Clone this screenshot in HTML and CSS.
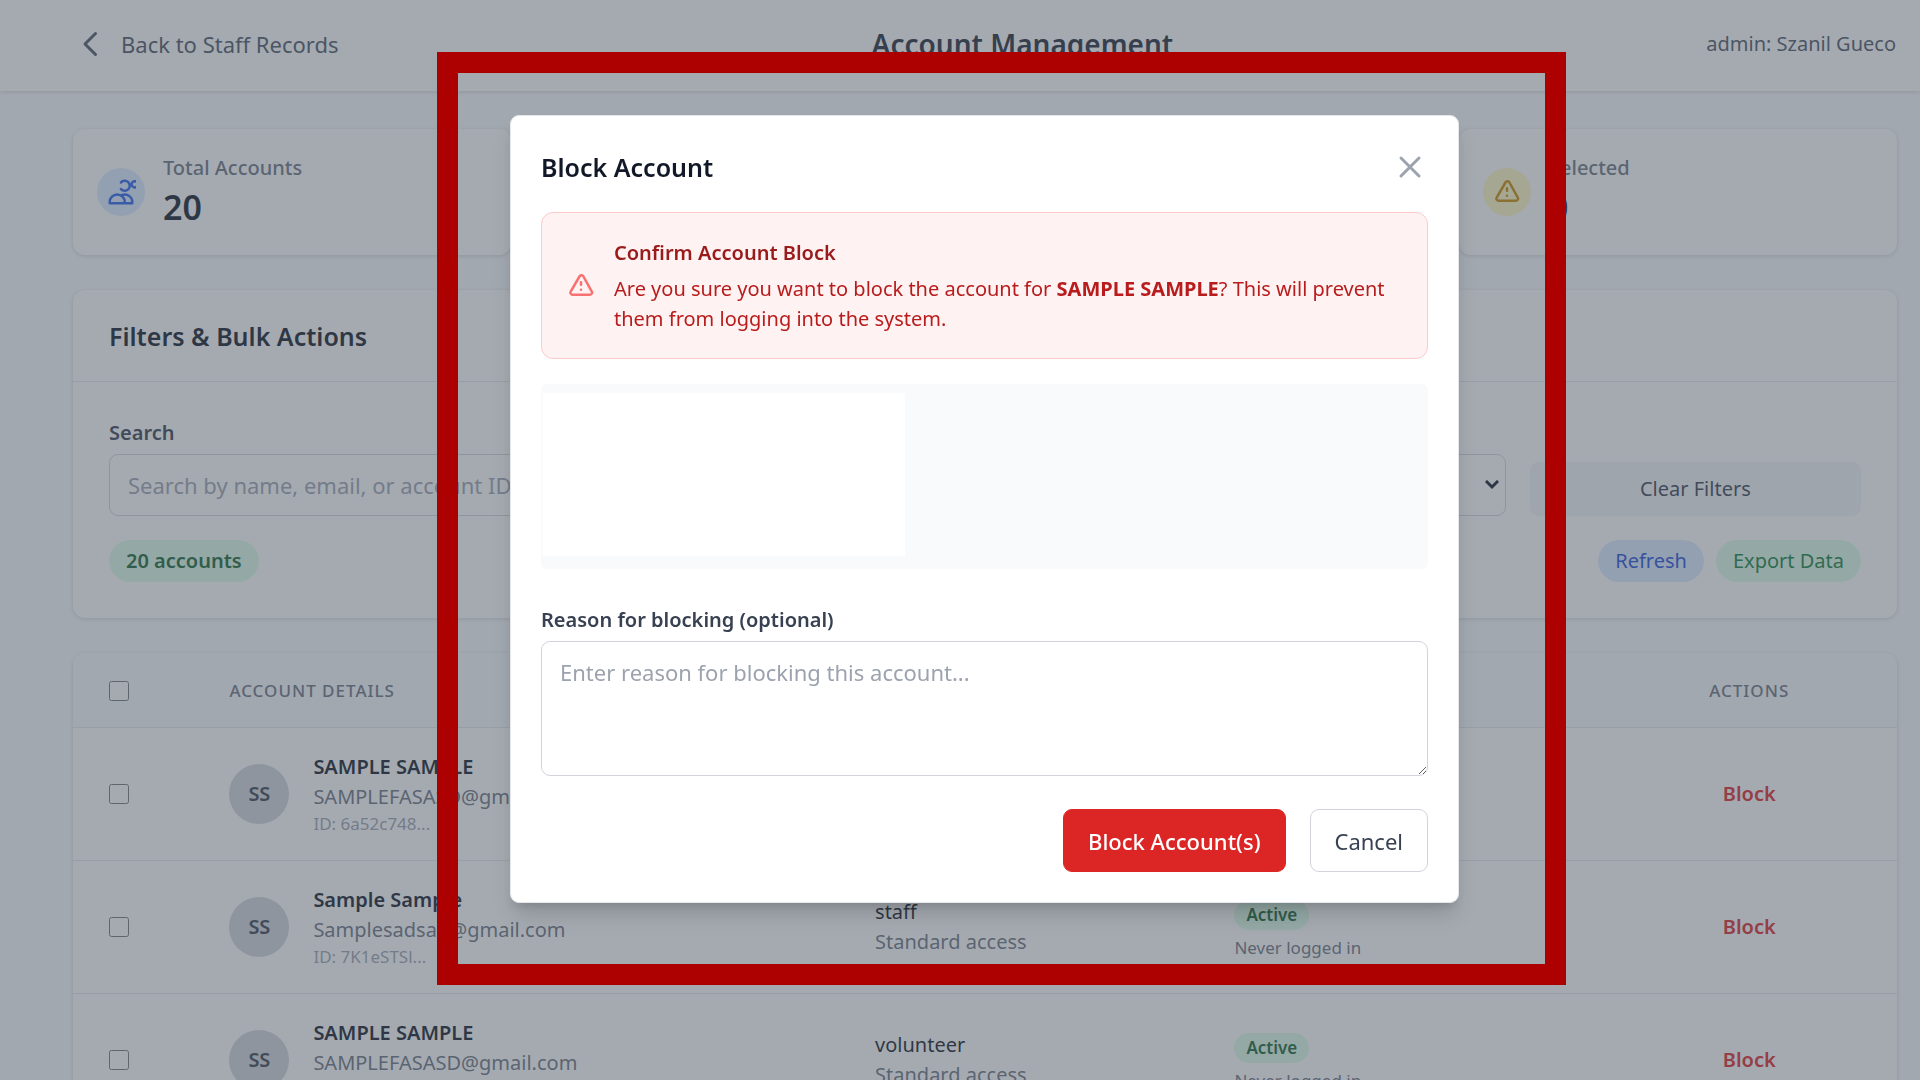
FILE: index.html
```html
<!DOCTYPE html>
<html lang="en">
<head>
<meta charset="utf-8">
<meta name="viewport" content="width=device-width, initial-scale=1">
<title>Account Management</title>
<link rel="stylesheet" href="styles.css">
</head>
<body>
<header class="topbar">
  <a class="back" href="#">
    <svg class="icon-lg" viewBox="0 0 24 24"><path d="M15 19l-7-7 7-7"/></svg>
    Back to Staff Records
  </a>
  <h1 class="page-title">Account Management</h1>
  <span class="user">admin: Szanil Gueco</span>
</header>

<main class="content">
  <section class="stats">
    <div class="card stat">
      <span class="badge blue"><svg class="icon" viewBox="0 0 24 24"><path d="M12 4.354a4 4 0 110 5.292M15 21H3v-1a6 6 0 0112 0v1zm0 0h6v-1a6 6 0 00-9-5.197m13.5-9a2.5 2.5 0 11-5 0 2.5 2.5 0 015 0z"/></svg></span>
      <div><p class="stat-label">Total Accounts</p><p class="stat-value">20</p></div>
    </div>
    <div class="card stat">
      <span class="badge green"><svg class="icon" viewBox="0 0 24 24"><path d="M5 13l4 4L19 7"/></svg></span>
      <div><p class="stat-label">Active</p><p class="stat-value">20</p></div>
    </div>
    <div class="card stat">
      <span class="badge red"><svg class="icon" viewBox="0 0 24 24"><path d="M6 6l12 12M18 6L6 18"/></svg></span>
      <div><p class="stat-label">Blocked</p><p class="stat-value">0</p></div>
    </div>
    <div class="card stat">
      <span class="badge yellow"><svg class="icon" viewBox="0 0 24 24"><path d="M12 9v2m0 4h.01m-6.938 4h13.856c1.54 0 2.502-1.667 1.732-2.5L13.732 4c-.77-.833-1.964-.833-2.732 0L3.732 16.5c-.77.833.192 2.5 1.732 2.5z"/></svg></span>
      <div><p class="stat-label">Selected</p><p class="stat-value">0</p></div>
    </div>
  </section>

  <section class="card filters">
    <h2 class="card-head">Filters &amp; Bulk Actions</h2>
    <div class="card-body">
      <div class="filter-grid">
        <div class="field wide">
          <label for="search">Search</label>
          <input class="control" id="search" type="text" placeholder="Search by name, email, or account ID...">
        </div>
        <div class="field">
          <label for="role">Role</label>
          <div class="select">
            <select class="control" id="role"><option>All Roles</option></select>
            <svg class="caret" viewBox="0 0 14 10"><path d="M2 2l5 5 5-5"/></svg>
          </div>
        </div>
        <div class="field">
          <label for="status">Status</label>
          <div class="select">
            <select class="control" id="status"><option>All Status</option></select>
            <svg class="caret" viewBox="0 0 14 10"><path d="M2 2l5 5 5-5"/></svg>
          </div>
        </div>
        <button class="clear" type="button">Clear Filters</button>
      </div>
      <div class="actions-row">
        <span class="pill pill-count">20 accounts</span>
        <div class="pill-group">
          <button class="pill pill-blue" type="button">Refresh</button>
          <button class="pill pill-green" type="button">Export Data</button>
        </div>
      </div>
    </div>
  </section>

  <section class="card">
    <table class="accounts">
      <colgroup><col class="c-check"><col class="c-details"><col class="c-role"><col class="c-status"><col></colgroup>
      <thead>
        <tr><th><input type="checkbox" aria-label="Select all"></th><th>Account Details</th><th>Role</th><th>Status</th><th class="center">Actions</th></tr>
      </thead>
      <tbody>
        <tr>
          <td><input type="checkbox" aria-label="Select account 1"></td>
          <td><div class="person"><span class="avatar">SS</span><div><p class="name">SAMPLE SAMPLE</p><p class="mail">SAMPLEFASASD@gmail.com</p><p class="uid">ID: 6a52c748...</p></div></div></td>
          <td><p class="role">volunteer</p><p class="mail">Standard access</p></td>
          <td><span class="status">Active</span><p class="login">Never logged in</p></td>
          <td class="center"><button class="block" type="button">Block</button></td>
        </tr>
        <tr>
          <td><input type="checkbox" aria-label="Select account 2"></td>
          <td><div class="person"><span class="avatar">SS</span><div><p class="name">Sample Sample</p><p class="mail">Samplesadsad@gmail.com</p><p class="uid">ID: 7K1eSTSl...</p></div></div></td>
          <td><p class="role">staff</p><p class="mail">Standard access</p></td>
          <td><span class="status">Active</span><p class="login">Never logged in</p></td>
          <td class="center"><button class="block" type="button">Block</button></td>
        </tr>
        <tr>
          <td><input type="checkbox" aria-label="Select account 3"></td>
          <td><div class="person"><span class="avatar">SS</span><div><p class="name">SAMPLE SAMPLE</p><p class="mail">SAMPLEFASASD@gmail.com</p><p class="uid">ID: 6a52c748...</p></div></div></td>
          <td><p class="role">volunteer</p><p class="mail">Standard access</p></td>
          <td><span class="status">Active</span><p class="login">Never logged in</p></td>
          <td class="center"><button class="block" type="button">Block</button></td>
        </tr>
      </tbody>
    </table>
  </section>
</main>

<div class="overlay">
  <div class="modal" role="dialog" aria-labelledby="modal-title">
    <div class="modal-head">
      <h2 id="modal-title">Block Account</h2>
      <button class="close" type="button" aria-label="Close"><svg class="icon-lg" viewBox="0 0 24 24"><path d="M6 18L18 6M6 6l12 12"/></svg></button>
    </div>
    <div class="alert">
      <svg class="icon" viewBox="0 0 24 24"><path d="M12 9v2m0 4h.01m-6.938 4h13.856c1.54 0 2.502-1.667 1.732-2.5L13.732 4c-.77-.833-1.964-.833-2.732 0L3.732 16.5c-.77.833.192 2.5 1.732 2.5z"/></svg>
      <div>
        <h3>Confirm Account Block</h3>
        <p>Are you sure you want to block the account for <strong>SAMPLE SAMPLE</strong>? This will prevent<br>them from logging into the system.</p>
      </div>
    </div>
    <div class="summary"><div class="summary-blank"></div></div>
    <div class="field reason">
      <label for="reason">Reason for blocking (optional)</label>
      <textarea class="control" id="reason" placeholder="Enter reason for blocking this account..."></textarea>
    </div>
    <div class="modal-actions">
      <button class="btn btn-danger" type="button">Block Account(s)</button>
      <button class="btn" type="button">Cancel</button>
    </div>
    <div class="highlight"></div>
  </div>
</div>
</body>
</html>
```
FILE: styles.css
```css
* { box-sizing: border-box; }

body {
  margin: 0;
  height: 100vh;
  overflow: hidden;
  background: #f9fafb;
  color: #111827;
  font-family: "Noto Sans", "Open Sans", sans-serif;
  font-size: 20px;
  line-height: 30px;
}

h1, h2, h3, p { margin: 0; font-weight: 600; }
p { font-weight: 400; }
button, input, select, textarea { font: inherit; color: inherit; }
button { border: 0; background: none; padding: 0; }

svg {
  display: block;
  flex: none;
  fill: none;
  stroke: currentColor;
  stroke-width: 2;
  stroke-linecap: round;
  stroke-linejoin: round;
}
.icon { width: 30px; height: 30px; }
.icon-lg { width: 36px; height: 36px; }

/* Top bar */
.topbar {
  display: flex;
  align-items: center;
  justify-content: space-between;
  height: 91px;
  padding: 0 24px 4px 73px;
  background: #fff;
  box-shadow: 0 1px 4px rgba(0, 0, 0, 0.15);
}
.back {
  display: flex;
  align-items: center;
  gap: 12px;
  color: #4b5563;
  font-size: 22px;
  text-decoration: none;
}
.page-title { font-size: 28px; line-height: 36px; color: #1f2937; }
.user { color: #4b5563; }

/* Page body */
.content {
  display: flex;
  flex-direction: column;
  gap: 35px;
  padding: 38px 23px 36px 73px;
}
.card {
  border-radius: 12px;
  background: #fff;
  box-shadow: 0 1px 4px rgba(0, 0, 0, 0.15);
}
.stats { display: grid; grid-template-columns: repeat(4, 1fr); gap: 24px; }
.stat { display: flex; align-items: center; gap: 18px; padding: 24px; }
.badge {
  display: grid;
  place-items: center;
  width: 48px;
  height: 48px;
  border-radius: 50%;
}
.blue { background: #dbeafe; color: #2563eb; }
.green { background: #dcfce7; color: #16a34a; }
.red { background: #fee2e2; color: #dc2626; }
.yellow { background: #fef9c3; color: #ca8a04; }
.stat-label { font-weight: 500; color: #6b7280; }
.stat-value { font-size: 34px; line-height: 48px; font-weight: 600; }

/* Filters */
.card-head {
  padding: 27px 36px 25px;
  border-bottom: 1px solid #e5e7eb;
  font-size: 25px;
  line-height: 39px;
}
.card-body { padding: 36px; }
.filter-grid {
  display: grid;
  grid-template-columns: repeat(5, 1fr);
  align-items: end;
  gap: 24px;
}
.wide { grid-column: span 2; }
.field { display: flex; flex-direction: column; gap: 6px; }
.field label { color: #374151; font-weight: 600; }
.control {
  width: 100%;
  height: 62px;
  padding: 0 18px;
  border: 1px solid #d1d5db;
  border-radius: 9px;
  background: #fff;
  font-size: 22px;
}
.control::placeholder { color: #9ca3af; opacity: 1; }
.select { display: grid; align-items: center; }
.select > * { grid-area: 1 / 1; }
.select .control { appearance: none; }
.caret {
  width: 14px;
  height: 10px;
  margin-right: 7px;
  justify-self: end;
  stroke-width: 3;
  stroke-linecap: square;
  stroke-linejoin: miter;
}
.clear {
  height: 54px;
  border-radius: 9px;
  background: #f3f4f6;
  color: #374151;
}
.actions-row { display: flex; justify-content: space-between; margin-top: 24px; }
.pill-group { display: flex; gap: 12px; }
.pill {
  padding: 6px 17px;
  border-radius: 21px;
}
.pill-count { background: #dcfce7; color: #166534; font-weight: 600; }
.pill-blue { background: #dbeafe; color: #1d4ed8; }
.pill-green { background: #dcfce7; color: #15803d; }

/* Accounts table */
.accounts { width: 100%; table-layout: fixed; border-collapse: collapse; }
.c-check { width: 6.6%; }
.c-details { width: 35.4%; }
.c-role { width: 19.7%; }
.c-status { width: 22.1%; }
.accounts th, .accounts td { padding: 24px 36px; text-align: left; }
.accounts th {
  padding: 26px 36px 24px;
  border-radius: 0;
  background: #f9fafb;
  color: #6b7280;
  font-size: 17px;
  line-height: 24px;
  font-weight: 500;
  letter-spacing: 1px;
  text-transform: uppercase;
}
.accounts th:first-child { border-top-left-radius: 12px; }
.accounts th:last-child { border-top-right-radius: 12px; }
.accounts td { border-top: 1px solid #e5e7eb; }
.accounts .center { text-align: center; }
.accounts input { display: block; width: 20px; height: 20px; margin: 0; }
.person { display: flex; align-items: center; gap: 24px; }
.avatar {
  display: grid;
  place-items: center;
  width: 60px;
  height: 60px;
  border-radius: 50%;
  background: #d1d5db;
  color: #374151;
  font-weight: 600;
}
.name { font-weight: 600; }
.mail { color: #6b7280; }
.uid { color: #9ca3af; font-size: 17px; line-height: 24px; }
.status {
  display: block;
  width: fit-content;
  margin: 6px 0;
  padding: 3px 12px;
  border-radius: 15px;
  background: #dcfce7;
  color: #166534;
  font-size: 17px;
  line-height: 24px;
  font-weight: 600;
}
.login { color: #6b7280; font-size: 17px; line-height: 24px; }
.block { color: #dc2626; font-weight: 600; }

/* Dialog */
.overlay {
  position: fixed;
  inset: 0;
  display: flex;
  align-items: flex-start;
  justify-content: center;
  padding: 115px 0 0 49px;
  background: rgba(75, 85, 99, 0.5);
}
.modal {
  position: relative;
  display: flex;
  flex-direction: column;
  width: 52%;
  max-width: 949px;
  padding: 30px;
  border: 1px solid #e5e7eb;
  border-radius: 9px;
  background: #fff;
  box-shadow: 0 15px 22px -4px rgba(0, 0, 0, 0.15), 0 6px 9px -3px rgba(0, 0, 0, 0.1);
}
.modal-head { display: flex; align-items: center; justify-content: space-between; height: 42px; }
.modal-head h2 { font-size: 25px; }
.close { color: #9ca3af; }
.alert {
  display: flex;
  align-items: center;
  gap: 18px;
  margin-top: 24px;
  padding: 25px 24px 24px;
  border: 1px solid #fecaca;
  border-radius: 12px;
  background: #fef2f2;
  color: #b91c1c;
}
.alert h3 { margin-bottom: 6px; color: #991b1b; font-size: 20px; }
.alert .icon { color: #f87171; }
.summary {
  margin-top: 25px;
  padding: 9px 2px 13px;
  border-radius: 6px;
  background: #f9fafb;
}
.summary-blank { width: 41%; height: 163px; background: #fff; }
.reason { margin-top: 36px; }
.reason .control { display: block; height: 135px; padding: 15px 18px; }
.modal-actions { display: flex; justify-content: flex-end; gap: 24px; margin-top: 33px; }
.btn {
  height: 63px;
  padding: 0 24px;
  border: 1px solid #d1d5db;
  border-radius: 9px;
  color: #374151;
  font-size: 22px;
}
.btn-danger { border-color: #dc2626; background: #dc2626; color: #fff; font-weight: 500; }

/* Callout frame drawn round the dialog */
.highlight {
  position: absolute;
  inset: -64px -108px -83px -74px;
  border: 21px solid #ad0000;
  pointer-events: none;
}
```
